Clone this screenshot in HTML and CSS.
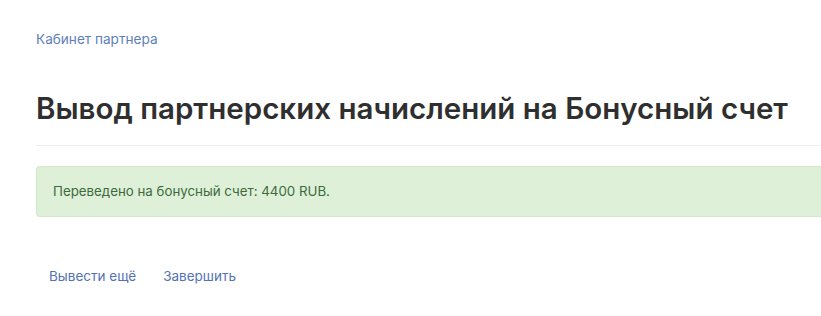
FILE: index.html
```html
<!DOCTYPE html>
<html lang="ru">
<head>
<meta charset="utf-8">
<title>Вывод партнерских начислений на Бонусный счет</title>
<link rel="stylesheet" href="styles.css">
</head>
<body>
<div class="page">
  <nav class="breadcrumb"><a href="#">Кабинет партнера</a></nav>
  <h1 class="title">Вывод партнерских начислений на Бонусный счет</h1>
  <div class="alert">Переведено на бонусный счет: 4400 RUB.</div>
  <div class="actions">
    <a class="btn-link" href="#">Вывести ещё</a>
    <a class="btn-link" href="#">Завершить</a>
  </div>
</div>
</body>
</html>
```
FILE: styles.css
```css
html, body {
  margin: 0;
  padding: 0;
  background: #fff;
}
body {
  font-family: Inter, "Noto Sans", sans-serif;
  color: #333;
}
.page {
  padding: 30px 0 0 36px;
}
.breadcrumb {
  font-size: 13.6px;
  line-height: 18px;
}
.breadcrumb a {
  color: #5d80ba;
  text-decoration: none;
}
.title {
  margin: 0;
  padding: 42px 0 19px;
  font-size: 29.5px;
  line-height: 36px;
  font-weight: 600;
  color: #2f2f2f;
  white-space: nowrap;
  border-bottom: 1px solid #eeeeee;
}
.alert {
  margin-top: 20px;
  padding: 15px 16px;
  background: #dff0d8;
  border: 1px solid #d3e8c8;
  border-right: none;
  border-radius: 4px 0 0 4px;
  color: #3c6b3d;
  font-size: 13.3px;
  line-height: 19px;
}
.actions {
  display: flex;
  margin-top: 42px;
}
.btn-link {
  padding: 8px 13px;
  font-size: 13.5px;
  line-height: 18px;
  color: #5572b6;
  text-decoration: none;
}
.btn-link + .btn-link {
  margin-left: 1px;
}
```
